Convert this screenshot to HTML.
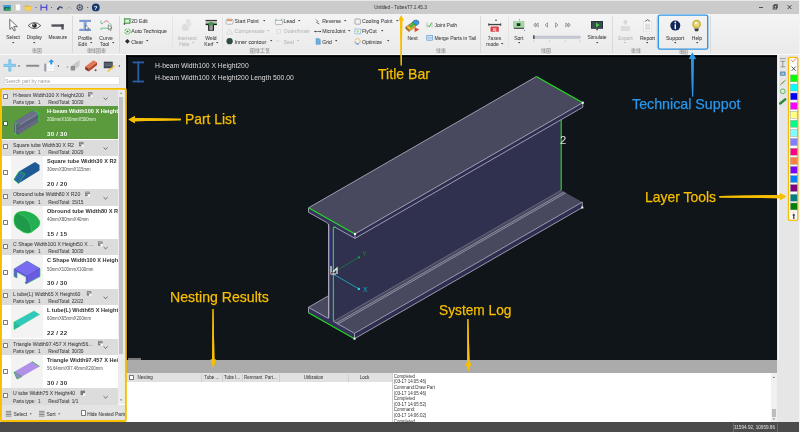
<!DOCTYPE html>
<html><head><meta charset="utf-8">
<style>
*{box-sizing:border-box}
html,body{margin:0;padding:0;width:800px;height:432px;overflow:hidden;background:#efefef;font-family:"Liberation Sans",sans-serif}
.a{position:absolute}
.t{position:absolute;white-space:nowrap;line-height:10px;height:10px;font-size:5.1px;color:#464646;-webkit-text-stroke:0.06px currentColor}
.g{color:#b8b8b8}
.b{font-weight:bold;-webkit-text-stroke:0}
.ann{position:absolute;white-space:nowrap;font-size:14px;line-height:16px;color:#f7bf00}
svg{overflow:visible}
</style></head><body>
<div id="root" style="position:absolute;left:0;top:0;width:800px;height:432px;overflow:hidden;will-change:transform"><!-- BASE -->
<div class="a" style="left:0;top:0;width:800px;height:14px;background:#cbcbcb;border-top:1px solid #e8e8e8"></div>
<div class="a" style="left:0;top:14px;width:799px;height:40px;background:linear-gradient(#f4f4f4,#eaeaea)"></div>
<div class="a" style="left:0;top:53.8px;width:799px;height:1.2px;background:#fafafa"></div>
<div class="a" style="left:0;top:55px;width:126px;height:367px;background:#e8e8e8"></div>
<div class="a" style="left:126px;top:55px;width:652px;height:305px;background:#10151a"></div>
<div class="a" style="left:777px;top:55px;width:22px;height:367px;background:#e6e6e6"></div>
<div class="a" style="left:777.5px;top:55px;width:1px;height:305px;background:#f6f6f6"></div>
<div class="a" style="left:799px;top:0;width:1px;height:432px;background:#f4f4f4"></div>
<div class="a" style="left:126px;top:360px;width:651px;height:13px;background:#ababab"></div>
<div class="a" style="left:126px;top:373px;width:266px;height:49px;background:#fff"></div>
<div class="a" style="left:126px;top:373px;width:266px;height:8.7px;background:#e1e1e1"></div>
<div class="a" style="left:391.5px;top:373px;width:385.5px;height:49px;background:#fff;border-left:1px solid #d0d0d0"></div>
<div class="a" style="left:0;top:422px;width:799px;height:10px;background:#4b4b4b"></div>
<div class="a" style="left:126px;top:358.2px;width:15px;height:1.8px;background:#7a7a7a"></div>
<div class="a" style="left:126px;top:55.6px;width:651px;height:1.2px;background:#000"></div>
<div class="a" style="left:126.7px;top:55px;width:1.3px;height:305px;background:#000"></div>
<!-- TITLE -->
<svg class="a" style="left:0;top:0" width="800" height="14">
 <!-- app icon -->
 <rect x="3.7" y="5" width="6.8" height="5.6" fill="#1f5f8a"/>
 <rect x="3.7" y="5" width="6.8" height="2" fill="#3aa0d8"/>
 <path d="M4.5,10.5 L6.5,7.5 L8.5,9 L10.5,6.5 L10.5,10.6 Z" fill="#2fae3a"/>
 <!-- new doc -->
 <rect x="15.8" y="4.2" width="4.4" height="6.4" fill="#fbfbfb" stroke="#d8d8d8" stroke-width="0.3"/>
 <!-- folder -->
 <path d="M24.8,5.2 h2.5 l0.8,0.9 h3.4 v4.4 h-6.7 Z" fill="#e7b43a"/>
 <path d="M24.8,6.8 h6.7 v3.7 h-6.7 Z" fill="#f6cf5c"/>
 <circle cx="36" cy="7.5" r="0.5" fill="#333"/>
 <!-- save H -->
 <path d="M41,4.6 v5.8 M46.7,4.6 v5.8 M41,7.4 h5.7" stroke="#5a4fd0" stroke-width="1.3" fill="none"/>
 <circle cx="51.7" cy="7.5" r="0.5" fill="#333"/>
 <!-- undo -->
 <path d="M57.5,9.5 Q59.5,5 62.5,8.2" stroke="#2c3e60" stroke-width="1.3" fill="none"/>
 <path d="M56.8,8.2 l1.6,1.8 l1.2,-1.6 z" fill="#2c3e60"/>
 <!-- redo gray -->
 <path d="M66.8,9.5 Q69,5 71.5,9" stroke="#b0b0b0" stroke-width="1" fill="none"/>
 <!-- gear -->
 <circle cx="79.8" cy="7.5" r="2.6" fill="none" stroke="#35455e" stroke-width="1.6" stroke-dasharray="1.1 0.5"/>
 <circle cx="79.8" cy="7.5" r="1" fill="#35455e"/>
 <circle cx="87.7" cy="7.5" r="0.5" fill="#333"/>
 <!-- help -->
 <circle cx="95.8" cy="7.4" r="3.9" fill="#163a6e"/>
 <text x="95.8" y="9.5" text-anchor="middle" font-family="Liberation Sans" font-weight="bold" font-size="5.6" fill="#fff">?</text>
 <!-- window controls -->
 <rect x="759" y="7" width="4" height="0.9" fill="#444"/>
 <rect x="773.2" y="5.6" width="3.4" height="3.4" fill="none" stroke="#444" stroke-width="0.9"/>
 <rect x="774.4" y="4.6" width="3.2" height="3.2" fill="none" stroke="#444" stroke-width="0.7"/>
 <path d="M787.6,5.2 l3.8,3.8 M791.4,5.2 l-3.8,3.8" stroke="#333" stroke-width="0.9"/>
</svg>
<div class="t" style="left:364px;top:2.5px;width:73px;text-align:center;font-size:4.7px;color:#444">Untitled - TubesT7.1.45.3</div>
<svg class="a" style="left:0;top:0" width="800" height="56">
 <!-- Select -->
 <path d="M9.7,19.3 L9.9,29.4 L12.1,27.4 L14,31 L15.5,30.2 L13.7,26.7 L17.4,26.6 Z" fill="#fafafa" stroke="#4a4a4a" stroke-width="0.8" stroke-linejoin="round"/>
 <!-- Display -->
 <path d="M28.2,25.6 Q34.5,19.6 40.8,25.6 Q34.5,31.6 28.2,25.6 Z" fill="#fafafa" stroke="#4a4a4a" stroke-width="0.9"/>
 <circle cx="34.5" cy="25.5" r="2.3" fill="#2a2a2a"/><circle cx="33.8" cy="24.8" r="0.7" fill="#ddd"/>
 <!-- Measure -->
 <rect x="51.5" y="24.3" width="12" height="2.4" fill="#4a4d55"/>
 <rect x="61.4" y="24.3" width="2.3" height="5.2" fill="#4a4d55"/>
 <path d="M53,24.3 v1 M55,24.3 v1 M57,24.3 v1 M59,24.3 v1" stroke="#ddd" stroke-width="0.4"/>
 <!-- Profile Edit -->
 <rect x="79.3" y="19.8" width="11.7" height="2.2" fill="#7d9bd2"/>
 <rect x="79.3" y="28.8" width="11.7" height="2.2" fill="#7d9bd2"/>
 <rect x="83.6" y="22" width="3.1" height="6.8" fill="#8aa7d8"/>
 <path d="M85.5,25 L85.6,30 L86.7,29 L87.6,30.8 L88.4,30.4 L87.5,28.7 L89.3,28.6 Z" fill="#fff" stroke="#333" stroke-width="0.5"/>
 <!-- Curve Tool -->
 <path d="M101,20.5 V23.6 H103" stroke="#50c878" stroke-width="0.9" fill="none"/>
 <path d="M103.5,23 Q106,19 109,22.6" stroke="#e0609a" stroke-width="0.9" fill="none"/>
 <path d="M109.5,23 Q112,24.5 111.5,28" stroke="#50c878" stroke-width="0.9" fill="none"/>
 <path d="M101,28.2 H108.5 M101,28.2 V30" stroke="#50c878" stroke-width="0.9" fill="none"/>
 <path d="M108.3,24.8 L108.4,29.8 L109.5,28.8 L110.4,30.6 L111.2,30.2 L110.3,28.5 L112.1,28.4 Z" fill="#fff" stroke="#333" stroke-width="0.5"/>
 <!-- 2D Edit -->
 <rect x="124.2" y="18.6" width="6" height="5" fill="#6cbf6c" stroke="#3a8a3a" stroke-width="0.5"/>
 <rect x="125.4" y="19.8" width="3.6" height="2.6" fill="#e9f5e9"/>
 <circle cx="124.4" cy="24" r="0.8" fill="#222"/>
 <!-- Auto Technique -->
 <circle cx="127.5" cy="31.5" r="2.8" fill="none" stroke="#5cb85c" stroke-width="0.9" stroke-dasharray="3.5 1"/>
 <circle cx="127.5" cy="31.5" r="1.1" fill="#3a9a3a"/>
 <!-- Clear -->
 <path d="M127.4,38.9 L129.8,41.3 L127.4,43.7 L125,41.3 Z" fill="#2a2a2a"/>
 <!-- Intersect Hole -->
 <circle cx="185.5" cy="27.5" r="3.6" fill="#dcdcdc"/>
 <circle cx="188.5" cy="24" r="3" fill="#e4e4e4"/>
 <rect x="186.5" y="19.3" width="3.5" height="3" rx="1" fill="#e0e0e0"/>
 <!-- Weld Kerf -->
 <rect x="205.6" y="19.9" width="11.3" height="1.4" fill="#333"/>
 <rect x="205.6" y="21.3" width="11.3" height="2.4" fill="#b8b8b8"/>
 <rect x="205.6" y="23.6" width="11.3" height="1.5" fill="#1a1a1a"/>
 <rect x="208.1" y="23.6" width="5.9" height="7.2" fill="#222"/>
 <rect x="209.3" y="25" width="3.5" height="5.2" fill="#9a9a9a"/>
 <path d="M208.3,23.2 Q211,20.6 213.8,23.2 L213,25.6 L209,25.6 Z" fill="#3a9a44"/>
 <!-- Start Point -->
 <rect x="226" y="19.2" width="7" height="5" rx="1.2" fill="#f8f8f8" stroke="#8a8f9a" stroke-width="0.6"/>
 <rect x="227" y="19.6" width="5" height="1.6" fill="#f08a4a"/>
 <!-- Compensate -->
 <path d="M226.5,34 L229.5,28.8 L232.5,34 Z" fill="none" stroke="#cfcfcf" stroke-width="0.6"/>
 <!-- Inner contour -->
 <circle cx="229.6" cy="41.2" r="3.1" fill="#2f4a44"/>
 <!-- Lead -->
 <rect x="275.3" y="20.4" width="7.2" height="4.2" rx="1" fill="#f5f5f5" stroke="#8a8f9a" stroke-width="0.6"/>
 <path d="M276,20.5 v-1.6 M281.6,20.5 v-1.6" stroke="#30b040" stroke-width="0.8"/>
 <!-- Outer/Inner -->
 <rect x="276.8" y="29.6" width="3.6" height="3.6" fill="none" stroke="#cfcfcf" stroke-width="0.6"/>
 <!-- Seal -->
 <path d="M276.5,41 h4 M277,40 v2" stroke="#d0d0d0" stroke-width="0.5"/>
 <!-- Reverse -->
 <path d="M316,19.5 L318,21.5 L316.5,22.5 L319.5,24" stroke="#555" stroke-width="0.7" fill="none"/>
 <!-- MicroJoint -->
 <path d="M314.3,31.5 h6.8" stroke="#333" stroke-width="0.6"/>
 <path d="M314.3,31.5 l1.3,-1 v2 z M321.1,31.5 l-1.3,-1 v2 z" fill="#333"/>
 <!-- Grid -->
 <path d="M316,38.5 h3 l1.3,1.3 v4.5 h-4.3 z" fill="#6ab0e0" stroke="#3a80b0" stroke-width="0.4"/>
 <!-- Cooling Point -->
 <rect x="355" y="19" width="5.4" height="5.2" rx="0.8" fill="none" stroke="#777" stroke-width="0.6"/>
 <!-- FlyCut -->
 <rect x="354.8" y="29" width="5.8" height="4.8" fill="none" stroke="#5aaad8" stroke-width="0.8" stroke-dasharray="1.2 0.6"/>
 <rect x="356.6" y="30.4" width="2.2" height="2" fill="#c0d870"/>
 <!-- Optimize -->
 <circle cx="357.6" cy="41.2" r="2.6" fill="none" stroke="#e0a030" stroke-width="0.9" stroke-dasharray="2 1"/>
 <path d="M355.2,42.5 a2.6,2.6 0 0 0 4,1" stroke="#3a8ad8" stroke-width="0.9" fill="none"/>
 <!-- Nest -->
 <path d="M405.8,27 L412.5,22.6 L416,25.6 L409.2,30.2 Z" fill="#f2c42a" stroke="#5a4020" stroke-width="0.45"/>
 <path d="M405.8,27 L409.2,30.2 L409.2,31.8 L405.8,28.7 Z" fill="#b8741e" stroke="#5a4020" stroke-width="0.4"/>
 <path d="M409.2,30.2 L416,25.6 L416,27 L409.2,31.8 Z" fill="#d89a22"/>
 <path d="M408.5,25.2 L413.8,21.6 L416.2,23.8 L410.8,27.6 Z" fill="#3cc04a" stroke="#2a5a2a" stroke-width="0.35"/>
 <path d="M413.8,20.6 Q416.5,19.2 418.5,21 Q419.8,23 417.8,24.8 L416.2,25.6 L412.6,22 Z" fill="#3a98e0" stroke="#1a3a6a" stroke-width="0.45"/>
 <path d="M414.6,27.2 L419.2,29.6 L414.6,31.9 Z" fill="#e0402c"/>
 <path d="M407.5,26.5 L411,24.2" stroke="#f07a5a" stroke-width="0.7"/>
 <!-- Joint Path -->
 <path d="M427,22.3 v5.4 M432,22.3 v5.4" stroke="#888" stroke-width="0.5"/>
 <path d="M428,25.3 L429.3,27 L431.5,22.8" stroke="#40b040" stroke-width="0.9" fill="none"/>
 <!-- Merge Parts -->
 <rect x="426.8" y="35.6" width="5.6" height="4.6" fill="#cfe3f5" stroke="#4a90d0" stroke-width="0.6"/>
 <path d="M427.5,37.9 h4.2" stroke="#4a90d0" stroke-width="0.5"/>
 <!-- 7axes mode -->
 <circle cx="496" cy="20.3" r="0.8" fill="#333"/>
 <rect x="488.5" y="23.9" width="12.5" height="1.3" fill="#444"/>
 <rect x="488.3" y="23.3" width="0.9" height="2.5" fill="#444"/><rect x="500.3" y="23.3" width="0.9" height="2.5" fill="#444"/>
 <rect x="490.5" y="26.5" width="8.3" height="5.3" rx="0.6" fill="#e0404a"/>
 <text x="494.6" y="30.9" text-anchor="middle" font-family="Liberation Sans" font-size="4.2" font-weight="bold" fill="#fff">5|</text>
 <!-- Sort -->
 <circle cx="519.5" cy="19.8" r="0.6" fill="#666"/>
 <rect x="513.5" y="21.6" width="10.5" height="6.2" fill="#a8d8a8" stroke="#6ac06a" stroke-width="0.4"/>
 <rect x="516.8" y="23.2" width="3.6" height="2.8" fill="#113a1a"/>
 <rect x="514" y="27.8" width="10" height="1" fill="#333"/>
 <circle cx="524.5" cy="30.3" r="0.5" fill="#666"/>
 <!-- playback -->
 <path d="M533.5,25 l2.2,-2 v4 z M536,25 l2.2,-2 v4 z" fill="none" stroke="#5a5a6a" stroke-width="0.55"/>
 <path d="M545,25 l2.5,-2.2 v4.4 z" fill="none" stroke="#5a5a6a" stroke-width="0.55"/>
 <path d="M558,25 l-2.5,-2.2 v4.4 z" fill="none" stroke="#5a5a6a" stroke-width="0.55"/>
 <path d="M568,25 l-2.2,-2 v4 z M570.5,25 l-2.2,-2 v4 z" fill="none" stroke="#5a5a6a" stroke-width="0.55"/>
 <!-- slider -->
 <rect x="533" y="36" width="47.5" height="2.4" rx="1" fill="#c6cad4" stroke="#a8acb8" stroke-width="0.3"/>
 <rect x="533" y="35.3" width="1.6" height="3.6" fill="#4a5060"/>
 <path d="M533.8,40.7 v0.8 M549.6,40.7 v0.8 M565.4,40.7 v0.8 M580.2,40.7 v0.8" stroke="#666" stroke-width="0.5"/>
 <!-- Simulate -->
 <rect x="591" y="21" width="12" height="7.8" fill="#28303a"/>
 <rect x="591.8" y="21.8" width="10.4" height="6.2" fill="#3a4a50"/>
 <path d="M596,22.4 L599.6,24.9 L596,27.4 Z" fill="#40d040"/>
 <rect x="596.3" y="28.8" width="1.6" height="1.4" fill="#333"/>
 <!-- Export -->
 <path d="M625.4,19.5 L628.2,22.4 H626.4 V24.5 H624.4 V22.4 H622.6 Z" fill="#d6d6d6"/>
 <rect x="620.8" y="26" width="9.2" height="5" fill="#dcdcdc"/>
 <!-- Report -->
 <rect x="643.8" y="21.5" width="7.6" height="9.6" fill="#fdfdfd" stroke="#c8c8c8" stroke-width="0.4"/>
 <rect x="645" y="23.5" width="5.2" height="6.5" fill="#dedede"/>
 <path d="M645.3,21.3 L647.6,19.6 L649.9,21.3" stroke="#333" stroke-width="0.7" fill="none"/>
 <!-- Support -->
 <circle cx="675.3" cy="25.6" r="5" fill="#0f2858"/>
 <circle cx="675.3" cy="22.5" r="0.9" fill="#fff"/>
 <rect x="674.6" y="24.3" width="1.4" height="4.8" fill="#fff"/>
 <!-- Help -->
 <circle cx="696.6" cy="24.2" r="4.4" fill="#c9b23a"/>
 <circle cx="696.6" cy="24.2" r="3" fill="#e6d67a"/>
 <circle cx="696" cy="23" r="1.3" fill="#fbf6d8"/>
 <path d="M694.3,28.5 h4.6 l-0.8,2.8 h-3 z" fill="#3a3a4a"/>
</svg>
<svg class="a" style="left:0;top:0" width="800" height="56"><rect x="658.3" y="15.1" width="49.4" height="34" rx="1.6" fill="none" stroke="#2f95e8" stroke-width="1.4"/></svg>
<div class="a" style="left:72.00px;top:16px;width:0.8px;height:37px;background:#dadada"></div>
<div class="a" style="left:118.70px;top:16px;width:0.8px;height:37px;background:#dadada"></div>
<div class="a" style="left:479.50px;top:16px;width:0.8px;height:37px;background:#dadada"></div>
<div class="a" style="left:611.70px;top:16px;width:0.8px;height:37px;background:#dadada"></div>
<div class="a" style="left:710.20px;top:16px;width:0.8px;height:37px;background:#dadada"></div>
<div class="a" style="left:171.90px;top:17px;width:0.8px;height:31px;background:#e4e4e4"></div>
<div class="a" style="left:222.10px;top:17px;width:0.8px;height:31px;background:#e4e4e4"></div>
<div class="a" style="left:507.50px;top:17px;width:0.8px;height:31px;background:#e4e4e4"></div>
<div class="a" style="left:656.00px;top:17px;width:0.8px;height:31px;background:#e4e4e4"></div>
<svg class="a" style="left:32.00px;top:48.30px" width="4.8" height="5.3"><path d="M0.3,1 h4.2 M2.4,0.2 v4.8 M0.8,2.8 h3.4 M0.6,4.6 h3.8 M1.2,1.8 l-0.8,1.6 M3.6,1.8 l0.8,1.6" stroke="#8e8e8e" stroke-width="0.6" fill="none"/></svg>
<svg class="a" style="left:36.60px;top:48.30px" width="4.8" height="5.3"><path d="M0.3,0.5 h4 v4.6 h-4 z M1.2,2 h2.2 M1.2,3.5 h2.2 M2.3,1.2 v3" stroke="#8e8e8e" stroke-width="0.6" fill="none"/></svg>
<svg class="a" style="left:86.60px;top:48.30px" width="4.8" height="5.3"><path d="M0.3,1 h4.2 M2.4,0.2 v4.8 M0.8,2.8 h3.4 M0.6,4.6 h3.8 M1.2,1.8 l-0.8,1.6 M3.6,1.8 l0.8,1.6" stroke="#8e8e8e" stroke-width="0.6" fill="none"/></svg>
<svg class="a" style="left:91.30px;top:48.30px" width="4.8" height="5.3"><path d="M1,0.2 v4.9 M0.2,1.8 h1.5 M2,1.2 h2.6 M2,2.8 h2.6 M2,4.5 h2.6 M3.3,0.2 v4.9" stroke="#8e8e8e" stroke-width="0.6" fill="none"/></svg>
<svg class="a" style="left:96.00px;top:48.30px" width="4.8" height="5.3"><path d="M0.3,0.5 h4 v4.6 h-4 z M1.2,2 h2.2 M1.2,3.5 h2.2 M2.3,1.2 v3" stroke="#8e8e8e" stroke-width="0.6" fill="none"/></svg>
<svg class="a" style="left:100.70px;top:48.30px" width="4.8" height="5.3"><path d="M0.3,1 h4.2 M2.4,0.2 v4.8 M0.8,2.8 h3.4 M0.6,4.6 h3.8 M1.2,1.8 l-0.8,1.6 M3.6,1.8 l0.8,1.6" stroke="#8e8e8e" stroke-width="0.6" fill="none"/></svg>
<svg class="a" style="left:250.10px;top:48.30px" width="4.8" height="5.3"><path d="M0.3,0.5 h4 v4.6 h-4 z M1.2,2 h2.2 M1.2,3.5 h2.2 M2.3,1.2 v3" stroke="#8e8e8e" stroke-width="0.6" fill="none"/></svg>
<svg class="a" style="left:255.20px;top:48.30px" width="4.8" height="5.3"><path d="M1,0.2 v4.9 M0.2,1.8 h1.5 M2,1.2 h2.6 M2,2.8 h2.6 M2,4.5 h2.6 M3.3,0.2 v4.9" stroke="#8e8e8e" stroke-width="0.6" fill="none"/></svg>
<svg class="a" style="left:260.30px;top:48.30px" width="4.8" height="5.3"><path d="M0.5,0.8 h3.8 M2.4,0.8 v3.8 M0.2,4.6 h4.4" stroke="#8e8e8e" stroke-width="0.6" fill="none"/></svg>
<svg class="a" style="left:265.40px;top:48.30px" width="4.8" height="5.3"><path d="M0.3,1 h4.2 M1.5,0.2 v1.6 M3.3,0.2 v1.6 M0.8,2.6 h3.2 l-3,2.2 h3.8" stroke="#8e8e8e" stroke-width="0.6" fill="none"/></svg>
<svg class="a" style="left:436.00px;top:48.30px" width="4.8" height="5.3"><path d="M1,0.2 v4.9 M0.2,1.8 h1.5 M2,1.2 h2.6 M2,2.8 h2.6 M2,4.5 h2.6 M3.3,0.2 v4.9" stroke="#8e8e8e" stroke-width="0.6" fill="none"/></svg>
<svg class="a" style="left:440.80px;top:48.30px" width="4.8" height="5.3"><path d="M0.3,1 h4.2 M2.4,0.2 v4.8 M0.8,2.8 h3.4 M0.6,4.6 h3.8 M1.2,1.8 l-0.8,1.6 M3.6,1.8 l0.8,1.6" stroke="#8e8e8e" stroke-width="0.6" fill="none"/></svg>
<svg class="a" style="left:541.00px;top:48.30px" width="4.8" height="5.3"><path d="M1,0.2 v4.9 M0.2,1.8 h1.5 M2,1.2 h2.6 M2,2.8 h2.6 M2,4.5 h2.6 M3.3,0.2 v4.9" stroke="#8e8e8e" stroke-width="0.6" fill="none"/></svg>
<svg class="a" style="left:546.10px;top:48.30px" width="4.8" height="5.3"><path d="M0.3,0.5 h4 v4.6 h-4 z M1.2,2 h2.2 M1.2,3.5 h2.2 M2.3,1.2 v3" stroke="#8e8e8e" stroke-width="0.6" fill="none"/></svg>
<svg class="a" style="left:631.00px;top:48.30px" width="4.8" height="5.3"><path d="M0.3,1 h4.2 M2.4,0.2 v4.8 M0.8,2.8 h3.4 M0.6,4.6 h3.8 M1.2,1.8 l-0.8,1.6 M3.6,1.8 l0.8,1.6" stroke="#8e8e8e" stroke-width="0.6" fill="none"/></svg>
<svg class="a" style="left:635.90px;top:48.30px" width="4.8" height="5.3"><path d="M1,0.2 v4.9 M0.2,1.8 h1.5 M2,1.2 h2.6 M2,2.8 h2.6 M2,4.5 h2.6 M3.3,0.2 v4.9" stroke="#8e8e8e" stroke-width="0.6" fill="none"/></svg>
<svg class="a" style="left:679.00px;top:48.60px" width="4.8" height="5.3"><path d="M0.3,1 h4.2 M2.4,0.2 v4.8 M0.8,2.8 h3.4 M0.6,4.6 h3.8 M1.2,1.8 l-0.8,1.6 M3.6,1.8 l0.8,1.6" stroke="#8e8e8e" stroke-width="0.6" fill="none"/></svg>
<svg class="a" style="left:683.20px;top:48.60px" width="4.8" height="5.3"><path d="M0.3,0.5 h4 v4.6 h-4 z M1.2,2 h2.2 M1.2,3.5 h2.2 M2.3,1.2 v3" stroke="#8e8e8e" stroke-width="0.6" fill="none"/></svg>
<div class="t " style="top:33.30px;font-size:4.9px;left:-6.90px;width:40px;text-align:center;">Select</div>
<svg class="a" style="left:11.80px;top:42.10px" width="2.4" height="1.6"><path d="M0,0 H2.4 L1.2,1.4 Z" fill="#444"/></svg>
<div class="t " style="top:33.30px;font-size:4.6px;left:14.40px;width:40px;text-align:center;">Display</div>
<svg class="a" style="left:32.80px;top:42.10px" width="2.4" height="1.6"><path d="M0,0 H2.4 L1.2,1.4 Z" fill="#444"/></svg>
<div class="t " style="top:33.30px;font-size:4.75px;left:37.80px;width:40px;text-align:center;">Measure</div>
<div class="t " style="top:33.30px;font-size:5px;left:65.20px;width:40px;text-align:center;">Profile</div>
<div class="t " style="top:38.90px;font-size:5px;left:62.60px;width:40px;text-align:center;">Edit</div>
<svg class="a" style="left:89.80px;top:42.20px" width="2.4" height="1.6"><path d="M0,0 H2.4 L1.2,1.4 Z" fill="#444"/></svg>
<div class="t " style="top:33.30px;font-size:5px;left:86.00px;width:40px;text-align:center;">Curve</div>
<div class="t " style="top:38.90px;font-size:5px;left:84.60px;width:40px;text-align:center;">Tool</div>
<svg class="a" style="left:111.70px;top:42.20px" width="2.4" height="1.6"><path d="M0,0 H2.4 L1.2,1.4 Z" fill="#444"/></svg>
<div class="t g" style="top:33.30px;font-size:5px;left:167.00px;width:40px;text-align:center;">Intersect</div>
<div class="t g" style="top:38.90px;font-size:5px;left:164.30px;width:40px;text-align:center;">Hole</div>
<svg class="a" style="left:191.90px;top:42.20px" width="2.4" height="1.6"><path d="M0,0 H2.4 L1.2,1.4 Z" fill="#bbb"/></svg>
<div class="t " style="top:33.30px;font-size:5px;left:191.00px;width:40px;text-align:center;">Weld</div>
<div class="t " style="top:38.90px;font-size:5px;left:188.90px;width:40px;text-align:center;">Kerf</div>
<svg class="a" style="left:215.90px;top:42.20px" width="2.4" height="1.6"><path d="M0,0 H2.4 L1.2,1.4 Z" fill="#444"/></svg>
<div class="t " style="top:33.40px;font-size:5px;left:392.60px;width:40px;text-align:center;">Nest</div>
<div class="t " style="top:33.40px;font-size:5px;left:474.50px;width:40px;text-align:center;">7axes</div>
<div class="t " style="top:39.00px;font-size:5px;left:472.50px;width:40px;text-align:center;">mode</div>
<svg class="a" style="left:501.30px;top:42.50px" width="2.4" height="1.6"><path d="M0,0 H2.4 L1.2,1.4 Z" fill="#444"/></svg>
<div class="t " style="top:33.40px;font-size:5px;left:498.80px;width:40px;text-align:center;">Sort</div>
<svg class="a" style="left:517.60px;top:42.10px" width="2.4" height="1.6"><path d="M0,0 H2.4 L1.2,1.4 Z" fill="#444"/></svg>
<div class="t " style="top:33.40px;font-size:4.9px;left:577.00px;width:40px;text-align:center;">Simulate</div>
<svg class="a" style="left:595.80px;top:42.10px" width="2.4" height="1.6"><path d="M0,0 H2.4 L1.2,1.4 Z" fill="#444"/></svg>
<div class="t g" style="top:33.40px;font-size:5px;left:605.40px;width:40px;text-align:center;">Export</div>
<svg class="a" style="left:624.20px;top:42.10px" width="2.4" height="1.6"><path d="M0,0 H2.4 L1.2,1.4 Z" fill="#bbb"/></svg>
<div class="t " style="top:33.40px;font-size:5px;left:627.50px;width:40px;text-align:center;">Report</div>
<svg class="a" style="left:646.30px;top:42.10px" width="2.4" height="1.6"><path d="M0,0 H2.4 L1.2,1.4 Z" fill="#444"/></svg>
<div class="t " style="top:33.40px;font-size:5.2px;left:655.00px;width:40px;text-align:center;">Support</div>
<svg class="a" style="left:673.80px;top:42.10px" width="2.4" height="1.6"><path d="M0,0 H2.4 L1.2,1.4 Z" fill="#444"/></svg>
<div class="t " style="top:33.40px;font-size:5px;left:677.00px;width:40px;text-align:center;">Help</div>
<svg class="a" style="left:695.80px;top:42.10px" width="2.4" height="1.6"><path d="M0,0 H2.4 L1.2,1.4 Z" fill="#444"/></svg>
<div class="t " style="top:16.30px;font-size:5.0px;left:131.30px;">2D Edit</div>
<div class="t " style="top:26.30px;font-size:5.2px;left:131.30px;">Auto Technique</div>
<div class="t " style="top:36.60px;font-size:5.0px;left:131.30px;">Clear</div>
<svg class="a" style="left:145.80px;top:39.90px" width="2.4" height="1.6"><path d="M0,0 H2.4 L1.2,1.4 Z" fill="#444"/></svg>
<div class="t " style="top:16.30px;font-size:5.2px;left:234.60px;">Start Point</div>
<svg class="a" style="left:263.10px;top:19.60px" width="2.4" height="1.6"><path d="M0,0 H2.4 L1.2,1.4 Z" fill="#444"/></svg>
<div class="t g" style="top:26.30px;font-size:5.3px;left:234.60px;">Compensate</div>
<svg class="a" style="left:266.80px;top:29.60px" width="2.4" height="1.6"><path d="M0,0 H2.4 L1.2,1.4 Z" fill="#bbb"/></svg>
<div class="t " style="top:36.60px;font-size:5.4px;left:234.60px;">Inner contour</div>
<svg class="a" style="left:269.80px;top:39.90px" width="2.4" height="1.6"><path d="M0,0 H2.4 L1.2,1.4 Z" fill="#444"/></svg>
<div class="t " style="top:16.30px;font-size:5.2px;left:283.50px;">Lead</div>
<svg class="a" style="left:298.30px;top:19.60px" width="2.4" height="1.6"><path d="M0,0 H2.4 L1.2,1.4 Z" fill="#444"/></svg>
<div class="t g" style="top:26.30px;font-size:5.2px;left:283.50px;">Outer/Inner</div>
<div class="t g" style="top:36.60px;font-size:5.2px;left:283.50px;">Seal</div>
<svg class="a" style="left:296.80px;top:39.90px" width="2.4" height="1.6"><path d="M0,0 H2.4 L1.2,1.4 Z" fill="#bbb"/></svg>
<div class="t " style="top:16.30px;font-size:5.1px;left:322.20px;">Reverse</div>
<svg class="a" style="left:344.30px;top:19.60px" width="2.4" height="1.6"><path d="M0,0 H2.4 L1.2,1.4 Z" fill="#444"/></svg>
<div class="t " style="top:26.30px;font-size:5.1px;left:322.20px;">MicroJoint</div>
<svg class="a" style="left:347.80px;top:29.60px" width="2.4" height="1.6"><path d="M0,0 H2.4 L1.2,1.4 Z" fill="#444"/></svg>
<div class="t " style="top:36.60px;font-size:5.1px;left:322.20px;">Grid</div>
<svg class="a" style="left:334.80px;top:39.90px" width="2.4" height="1.6"><path d="M0,0 H2.4 L1.2,1.4 Z" fill="#444"/></svg>
<div class="t " style="top:16.30px;font-size:5.13px;left:362.00px;">Cooling Point</div>
<svg class="a" style="left:395.80px;top:19.60px" width="2.4" height="1.6"><path d="M0,0 H2.4 L1.2,1.4 Z" fill="#444"/></svg>
<div class="t " style="top:26.30px;font-size:5.1px;left:362.00px;">FlyCut</div>
<svg class="a" style="left:380.80px;top:29.60px" width="2.4" height="1.6"><path d="M0,0 H2.4 L1.2,1.4 Z" fill="#444"/></svg>
<div class="t " style="top:36.60px;font-size:5.1px;left:362.00px;">Optimize</div>
<svg class="a" style="left:386.80px;top:39.90px" width="2.4" height="1.6"><path d="M0,0 H2.4 L1.2,1.4 Z" fill="#444"/></svg>
<div class="t " style="top:20.00px;font-size:5.1px;left:434.40px;">Joint Path</div>
<div class="t " style="top:33.20px;font-size:5.07px;left:434.40px;">Merge Parts in Tail</div><svg class="a" style="left:0;top:0" width="130" height="90">
 <path d="M8.7,59.6 h2.2 v4.7 h4.8 v2.2 h-4.8 v4.7 h-2.2 v-4.7 h-4.8 v-2.2 h4.8 z" fill="#8fd0f2" stroke="#56a8dc" stroke-width="0.5"/>
 <rect x="18.4" y="65.4" width="1.2" height="1.1" fill="#222"/>
 <rect x="26" y="64.8" width="13.4" height="1.9" rx="0.9" fill="#8c8c8c"/>
 <rect x="46.5" y="63" width="8.3" height="8.5" fill="#fafafa" stroke="#cfcfcf" stroke-width="0.4"/>
 <path d="M47.5,66.5 h6 M47.5,68.5 h6" stroke="#c8d8e8" stroke-width="0.4"/>
 <rect x="44.2" y="63.5" width="2" height="8" rx="0.8" fill="#9a9ea8"/>
 <path d="M51.3,59.2 L54,62 H52.3 V64.5 H50.3 V62 H48.6 Z" fill="#1e9ae8"/>
 <rect x="57.8" y="65.4" width="1.2" height="1.1" fill="#222"/>
 <circle cx="67.5" cy="67" r="0.8" fill="#9a9a9a"/>
 <path d="M70,67 L74,64 L79.5,60 L79.5,66 L74,70 L70,70 Z" fill="#c8c8c8"/>
 <path d="M71,66 L75,66 L75,70.5 L71,70.5 Z" fill="#8e8e8e"/>
 <path d="M85.2,66.5 L93.5,60.2 L97,62.2 L88.8,68.6 Z" fill="#e07a5a"/>
 <path d="M85.2,66.5 L88.8,68.6 L88.8,71.6 L85.2,69.5 Z" fill="#8a3020"/>
 <path d="M88.8,68.6 L97,62.2 L97,65.2 L88.8,71.6 Z" fill="#b8482c"/>
 <circle cx="95.6" cy="70.2" r="1" fill="#8a3a30"/>
 <rect x="103.5" y="61.3" width="9.5" height="7.2" fill="#3c4450" stroke="#f0f0f0" stroke-width="0.5"/>
 <path d="M104.5,64 h7.5 M104.5,65.8 h7.5" stroke="#a8b0c0" stroke-width="0.5"/>
 <path d="M107.6,71.5 L114.5,65.5" stroke="#f0c020" stroke-width="1.3"/>
 <rect x="118.8" y="65.4" width="1.2" height="1.1" fill="#222"/>
</svg>
<div class="a" style="left:3.5px;top:75.7px;width:116.7px;height:9.5px;background:#fff;border:0.5px solid #e0e0e0"></div>
<div class="t " style="left:5.20px;top:76.60px;font-size:4.85px;color:#9c9c9c;-webkit-text-stroke:0;">Search part by name</div>
<div class="a" style="left:2px;top:89.4px;width:122.7px;height:331.5px;background:#fff"></div>
<div class="a" style="left:117.8px;top:89.4px;width:6.9px;height:315px;background:#ececec"></div>
<div class="a" style="left:119.2px;top:96.5px;width:3.7px;height:257.5px;background:#c2c2c2"></div>
<svg class="a" style="left:0;top:0" width="130" height="420"><path d="M120,94 L121.1,92.7 L122.2,94" stroke="#555" stroke-width="0.5" fill="none"/><path d="M120,399.5 L121.1,400.8 L122.2,399.5 Z" fill="#555"/></svg>
<div class="a" style="left:2px;top:89.85px;width:115.8px;height:16.2px;background:#dcdcdc"></div>
<div class="a" style="left:3px;top:94.45px;width:5px;height:5px;background:#fff;border:0.6px solid #7a7a7a;border-radius:0.8px"></div>
<div class="t " style="left:13.00px;top:89.75px;font-size:5.13px;color:#444;">H-beam Width100 X Height200</div>
<div class="t " style="left:13.00px;top:98.05px;font-size:4.72px;color:#444;">Parts type: &nbsp;1</div>
<div class="t " style="left:48.20px;top:98.05px;font-size:4.72px;color:#444;">Rest/Total: 30/30</div>
<div class="a" style="left:2px;top:106.05px;width:115.8px;height:33.45px;background:#5b9a3d"></div>
<div class="a" style="left:3px;top:120.65px;width:5px;height:5px;background:#fff;border:0.6px solid #3a6a2a;border-radius:0.8px"></div>
<div class="a" style="left:47px;top:106.15px;width:70.8px;height:10px;overflow:hidden"><div class="t b" style="left:0;top:0;font-size:5.6px;color:#ffffff">H-beam Width100 X Height200</div></div>
<div class="t " style="left:47.00px;top:114.25px;font-size:5.0px;color:#d8ecd0;transform:scaleX(0.86);transform-origin:0 0;">200mmX100mmX500mm</div>
<div class="t b" style="left:47px;top:129.05px;font-size:6.1px;letter-spacing:0.25px;color:#ffffff">30 / 30</div>
<div class="a" style="left:2px;top:139.60px;width:115.8px;height:16.2px;background:#dcdcdc"></div>
<div class="a" style="left:3px;top:144.20px;width:5px;height:5px;background:#fff;border:0.6px solid #7a7a7a;border-radius:0.8px"></div>
<div class="t " style="left:13.00px;top:139.50px;font-size:5.13px;color:#444;">Square tube Width30 X R2</div>
<div class="t " style="left:13.00px;top:147.80px;font-size:4.72px;color:#444;">Parts type: &nbsp;1</div>
<div class="t " style="left:48.20px;top:147.80px;font-size:4.72px;color:#444;">Rest/Total: 20/20</div>
<div class="a" style="left:10.6px;top:155.80px;width:32.4px;height:33.45px;background:#f3f3f3"></div>
<div class="a" style="left:3px;top:170.40px;width:5px;height:5px;background:#fff;border:0.6px solid #7a7a7a;border-radius:0.8px"></div>
<div class="a" style="left:47px;top:155.90px;width:70.8px;height:10px;overflow:hidden"><div class="t b" style="left:0;top:0;font-size:5.6px;color:#333">Square tube Width30 X R2</div></div>
<div class="t " style="left:47.00px;top:164.00px;font-size:5.0px;color:#666;transform:scaleX(0.86);transform-origin:0 0;">30mmX30mmX115mm</div>
<div class="t b" style="left:47px;top:178.80px;font-size:6.1px;letter-spacing:0.25px;color:#333">20 / 20</div>
<div class="a" style="left:2px;top:189.35px;width:115.8px;height:16.2px;background:#dcdcdc"></div>
<div class="a" style="left:3px;top:193.95px;width:5px;height:5px;background:#fff;border:0.6px solid #7a7a7a;border-radius:0.8px"></div>
<div class="t " style="left:13.00px;top:189.25px;font-size:5.13px;color:#444;">Obround tube Width80 X R20</div>
<div class="t " style="left:13.00px;top:197.55px;font-size:4.72px;color:#444;">Parts type: &nbsp;1</div>
<div class="t " style="left:48.20px;top:197.55px;font-size:4.72px;color:#444;">Rest/Total: 15/15</div>
<div class="a" style="left:10.6px;top:205.55px;width:32.4px;height:33.45px;background:#f3f3f3"></div>
<div class="a" style="left:3px;top:220.15px;width:5px;height:5px;background:#fff;border:0.6px solid #7a7a7a;border-radius:0.8px"></div>
<div class="a" style="left:47px;top:205.65px;width:70.8px;height:10px;overflow:hidden"><div class="t b" style="left:0;top:0;font-size:5.6px;color:#333">Obround tube Width80 X R20</div></div>
<div class="t " style="left:47.00px;top:213.75px;font-size:5.0px;color:#666;transform:scaleX(0.86);transform-origin:0 0;">40mmX80mmX40mm</div>
<div class="t b" style="left:47px;top:228.55px;font-size:6.1px;letter-spacing:0.25px;color:#333">15 / 15</div>
<div class="a" style="left:2px;top:239.10px;width:115.8px;height:16.2px;background:#dcdcdc"></div>
<div class="a" style="left:3px;top:243.70px;width:5px;height:5px;background:#fff;border:0.6px solid #7a7a7a;border-radius:0.8px"></div>
<div class="t " style="left:13.00px;top:239.00px;font-size:5.13px;color:#444;">C Shape Width100 X Height50 X ...</div>
<div class="t " style="left:13.00px;top:247.30px;font-size:4.72px;color:#444;">Parts type: &nbsp;1</div>
<div class="t " style="left:48.20px;top:247.30px;font-size:4.72px;color:#444;">Rest/Total: 30/30</div>
<div class="a" style="left:10.6px;top:255.30px;width:32.4px;height:33.45px;background:#f3f3f3"></div>
<div class="a" style="left:3px;top:269.90px;width:5px;height:5px;background:#fff;border:0.6px solid #7a7a7a;border-radius:0.8px"></div>
<div class="a" style="left:47px;top:255.40px;width:70.8px;height:10px;overflow:hidden"><div class="t b" style="left:0;top:0;font-size:5.6px;color:#333">C Shape Width100 X Height50</div></div>
<div class="t " style="left:47.00px;top:263.50px;font-size:5.0px;color:#666;transform:scaleX(0.86);transform-origin:0 0;">50mmX100mmX100mm</div>
<div class="t b" style="left:47px;top:278.30px;font-size:6.1px;letter-spacing:0.25px;color:#333">30 / 30</div>
<div class="a" style="left:2px;top:288.85px;width:115.8px;height:16.2px;background:#dcdcdc"></div>
<div class="a" style="left:3px;top:293.45px;width:5px;height:5px;background:#fff;border:0.6px solid #7a7a7a;border-radius:0.8px"></div>
<div class="t " style="left:13.00px;top:288.75px;font-size:5.13px;color:#444;">L tube(L) Width65 X Height60</div>
<div class="t " style="left:13.00px;top:297.05px;font-size:4.72px;color:#444;">Parts type: &nbsp;1</div>
<div class="t " style="left:48.20px;top:297.05px;font-size:4.72px;color:#444;">Rest/Total: 22/22</div>
<div class="a" style="left:10.6px;top:305.05px;width:32.4px;height:33.45px;background:#f3f3f3"></div>
<div class="a" style="left:3px;top:319.65px;width:5px;height:5px;background:#fff;border:0.6px solid #7a7a7a;border-radius:0.8px"></div>
<div class="a" style="left:47px;top:305.15px;width:70.8px;height:10px;overflow:hidden"><div class="t b" style="left:0;top:0;font-size:5.6px;color:#333">L tube(L) Width65 X Height60</div></div>
<div class="t " style="left:47.00px;top:313.25px;font-size:5.0px;color:#666;transform:scaleX(0.86);transform-origin:0 0;">60mmX65mmX200mm</div>
<div class="t b" style="left:47px;top:328.05px;font-size:6.1px;letter-spacing:0.25px;color:#333">22 / 22</div>
<div class="a" style="left:2px;top:338.60px;width:115.8px;height:16.2px;background:#dcdcdc"></div>
<div class="a" style="left:3px;top:343.20px;width:5px;height:5px;background:#fff;border:0.6px solid #7a7a7a;border-radius:0.8px"></div>
<div class="t " style="left:13.00px;top:338.50px;font-size:5.13px;color:#444;">Triangle Width97.457 X Height56...</div>
<div class="t " style="left:13.00px;top:346.80px;font-size:4.72px;color:#444;">Parts type: &nbsp;1</div>
<div class="t " style="left:48.20px;top:346.80px;font-size:4.72px;color:#444;">Rest/Total: 30/30</div>
<div class="a" style="left:10.6px;top:354.80px;width:32.4px;height:33.45px;background:#f3f3f3"></div>
<div class="a" style="left:3px;top:369.40px;width:5px;height:5px;background:#fff;border:0.6px solid #7a7a7a;border-radius:0.8px"></div>
<div class="a" style="left:47px;top:354.90px;width:70.8px;height:10px;overflow:hidden"><div class="t b" style="left:0;top:0;font-size:5.6px;color:#333">Triangle Width97.457 X Height56</div></div>
<div class="t " style="left:47.00px;top:363.00px;font-size:5.0px;color:#666;transform:scaleX(0.86);transform-origin:0 0;">56.64mmX97.46mmX200mm</div>
<div class="t b" style="left:47px;top:377.80px;font-size:6.1px;letter-spacing:0.25px;color:#333">30 / 30</div>
<div class="a" style="left:2px;top:388.35px;width:115.8px;height:16.2px;background:#dcdcdc"></div>
<div class="a" style="left:3px;top:392.95px;width:5px;height:5px;background:#fff;border:0.6px solid #7a7a7a;border-radius:0.8px"></div>
<div class="t " style="left:13.00px;top:388.25px;font-size:5.13px;color:#444;">U tube Width75 X Height40</div>
<div class="t " style="left:13.00px;top:396.55px;font-size:4.72px;color:#444;">Parts type: &nbsp;1</div>
<div class="t " style="left:48.20px;top:396.55px;font-size:4.72px;color:#444;">Rest/Total: 1/1</div>
<div class="a" style="left:2px;top:404.6px;width:122.7px;height:16px;background:#e4e4e4"></div>
<div class="t " style="left:13.50px;top:409.60px;font-size:4.9px;color:#444;">Select</div>
<div class="t " style="left:46.60px;top:409.60px;font-size:4.9px;color:#444;">Sort</div>
<div class="a" style="left:80.5px;top:410.3px;width:5.8px;height:6px;background:#fff;border:0.6px solid #7a7a7a;border-radius:0.8px"></div>
<div class="t " style="left:87.30px;top:409.60px;font-size:4.8px;color:#444;">Hide Nested Parts</div>
<svg class="a" style="left:0;top:0" width="130" height="422"><rect x="88" y="92.15" width="4.5" height="4.4" fill="#7a7a7a"/><rect x="88.7" y="92.95" width="3" height="0.5" fill="#ddd"/><rect x="88.7" y="94.35" width="3" height="0.5" fill="#ddd"/><rect x="90.5" y="94.75" width="2.3" height="2.3" fill="#fff"/><path d="M103.6,97.75 L105.6,99.65 L107.6,97.75" stroke="#444" stroke-width="0.75" fill="none"/><path d="M14.2,121.9 L33.3,110.3 L39.2,112.8 L38.8,121.9 L17.5,135.3 L14.2,133 Z" fill="#5a6078"/><path d="M14.2,121.9 L33.3,110.3 L39.2,112.8 L20,124.5 Z" fill="#6a7088"/><path d="M18,126 L38.8,113.5 M17.5,131.5 L38.8,119 M18.5,133.5 L38.8,121" stroke="#8a90a8" stroke-width="0.45"/><path d="M20,124.5 L39.2,112.8" stroke="#9aa0b8" stroke-width="0.5"/><path d="M14.2,121.9 L17.5,124.2 M15.6,123 V134 M14.2,133.5 L17.5,135.3 M38.9,112.8 V121.9 M33.3,110.3 L39.2,112.8" stroke="#22e022" stroke-width="0.9" fill="none"/><rect x="79" y="141.90" width="4.5" height="4.4" fill="#7a7a7a"/><rect x="79.7" y="142.70" width="3" height="0.5" fill="#ddd"/><rect x="79.7" y="144.10" width="3" height="0.5" fill="#ddd"/><rect x="81.5" y="144.50" width="2.3" height="2.3" fill="#fff"/><path d="M103.6,147.50 L105.6,149.40 L107.6,147.50" stroke="#444" stroke-width="0.75" fill="none"/><path d="M14,179.5 L19,171.5 L35,162 L39.5,165 L39.5,170.5 L18.5,183.5 Z" fill="#1f5a96"/><path d="M14,179.5 L19,171.5 L25,174 L18.5,183.5 Z" fill="#2a68a8" stroke="#2ac040" stroke-width="0.7"/><rect x="85.2" y="191.65" width="4.5" height="4.4" fill="#7a7a7a"/><rect x="85.9" y="192.45" width="3" height="0.5" fill="#ddd"/><rect x="85.9" y="193.85" width="3" height="0.5" fill="#ddd"/><rect x="87.7" y="194.25" width="2.3" height="2.3" fill="#fff"/><path d="M103.6,197.25 L105.6,199.15 L107.6,197.25" stroke="#444" stroke-width="0.75" fill="none"/><path d="M14,219 Q14,212.5 21,211.5 L25,211.5 Q36,213 39.6,221 Q40.5,226 36,228.5 L31,232.5 Q27,234 23,232 L17,228 Q13.5,225 14,219 Z" fill="#1e9a4a" stroke="#2ad040" stroke-width="0.7"/><path d="M19,213 Q22,211.3 25.5,211.6 Q35.5,213.5 39.4,221.5 Q40,225.5 37,228 L32,231.5 Q31.5,225 29,221.5 Q25,216.5 19,213 Z" fill="#24b052"/><path d="M18.3,213.3 Q26.5,216.5 29.5,222.5 Q31.5,226.5 31.8,231.8" stroke="#40d060" stroke-width="0.6" fill="none"/><rect x="98" y="241.40" width="4.5" height="4.4" fill="#7a7a7a"/><rect x="98.7" y="242.20" width="3" height="0.5" fill="#ddd"/><rect x="98.7" y="243.60" width="3" height="0.5" fill="#ddd"/><rect x="100.5" y="244.00" width="2.3" height="2.3" fill="#fff"/><path d="M103.6,247.00 L105.6,248.90 L107.6,247.00" stroke="#444" stroke-width="0.75" fill="none"/><path d="M14,269 L27,261 L40,268.5 L40,276.5 L26,284 L25,282.5 L26,281.5 L26,277 L17,272 L17,278 L14,276.5 Z" fill="#6a5ae0" stroke="#2ab860" stroke-width="0.6"/><path d="M14,269 L27,261 L40,268.5 L27,276 Z" fill="#7a6cf0"/><path d="M14,269 L27,276 L40,268.5 M27,276 V283" stroke="#5040c0" stroke-width="0.4" fill="none"/><rect x="86.8" y="291.15" width="4.5" height="4.4" fill="#7a7a7a"/><rect x="87.5" y="291.95" width="3" height="0.5" fill="#ddd"/><rect x="87.5" y="293.35" width="3" height="0.5" fill="#ddd"/><rect x="89.3" y="293.75" width="2.3" height="2.3" fill="#fff"/><path d="M103.6,296.75 L105.6,298.65 L107.6,296.75" stroke="#444" stroke-width="0.75" fill="none"/><path d="M14,322 L34,311 L39.5,314.5 L20,326 Z" fill="#30c8c0" stroke="#30d070" stroke-width="0.5"/><path d="M14,322 L20,326 L14,329.5 Z" fill="#28b0c0" stroke="#22d040" stroke-width="0.7"/><rect x="98" y="340.90" width="4.5" height="4.4" fill="#7a7a7a"/><rect x="98.7" y="341.70" width="3" height="0.5" fill="#ddd"/><rect x="98.7" y="343.10" width="3" height="0.5" fill="#ddd"/><rect x="100.5" y="343.50" width="2.3" height="2.3" fill="#fff"/><path d="M103.6,346.50 L105.6,348.40 L107.6,346.50" stroke="#444" stroke-width="0.75" fill="none"/><path d="M14,372 L32,361.5 L39.5,366.5 L22,376.5 Z" fill="#b090e8"/><path d="M14,372 L22,376.5 L17,379 Z" fill="#a080e0" stroke="#30b040" stroke-width="0.8"/><path d="M32,361.5 L39.5,366.5" stroke="#30b040" stroke-width="0.8"/><rect x="80.5" y="390.65" width="4.5" height="4.4" fill="#7a7a7a"/><rect x="83" y="393.25" width="2.3" height="2.3" fill="#fff"/><path d="M103.6,396.25 L105.6,398.15 L107.6,396.25" stroke="#444" stroke-width="0.75" fill="none"/><g fill="#8a8a8a"><rect x="5.8" y="410.8" width="5.6" height="1"/><rect x="5.8" y="412.4" width="5.6" height="1"/><rect x="5.8" y="414" width="5.6" height="1"/><rect x="5.8" y="415.6" width="5.6" height="1"/><rect x="39" y="410.8" width="5.6" height="1"/><rect x="39" y="412.4" width="5.6" height="1"/><rect x="39" y="414" width="5.6" height="1"/><rect x="39" y="415.6" width="5.6" height="1"/></g><rect x="30.2" y="413.3" width="1.1" height="1" fill="#222"/><rect x="58.6" y="413.3" width="1.1" height="1" fill="#222"/></svg>
<svg class="a" style="left:0;top:0" width="130" height="432"><rect x="0.95" y="88.85" width="124.9" height="332.2" rx="1" fill="none" stroke="#f7bf00" stroke-width="1.9"/></svg><!-- CANVAS DRAWING -->
<svg class="a" style="left:0;top:0" width="800" height="432" viewBox="0 0 800 432">
<rect x="132.6" y="61.5" width="11.4" height="1.8" fill="#2b5ea8"/>
<rect x="132.6" y="80.6" width="11.4" height="1.8" fill="#2b5ea8"/>
<rect x="137.4" y="61.5" width="1.8" height="20.9" fill="#2b5ea8"/>
<polygon points="333.4,226.27612903225807 561.2,95.1 561.2,190.2 333.4,321.37391304347824" fill="#30304f"/>
<polygon points="333.4,321.37391304347824 354.5,333.3 582.3,202.1 561.2,190.2" fill="#48495f"/>
<polygon points="354.5,333.3 582.3,202.1 582.3,207.5 354.5,338.7" fill="#2e2d50"/>
<polygon points="308.5,307.3 354.5,333.3 354.5,338.7 308.5,312.7" fill="#35325a"/>
<polygon points="308.5,307.3 328.7,295.66593503072875 328.7,318.7173913043478" fill="#48495f"/>
<polygon points="328.7,223.63806451612902 333.4,226.27612903225807 333.4,321.37391304347824 328.7,318.7173913043478" fill="#35325a"/>
<polygon points="355.0,233.9 582.8,102.7 582.8,107.2 355.0,238.4" fill="#2e2d50"/>
<polygon points="308.5,207.8 536.3,76.6 582.8,102.7 355.0,233.9" fill="#48495f"/>
<polygon points="308.5,207.8 355.0,233.9 355.0,238.4 308.5,212.3" fill="#35325a"/>
<line x1="308.5" y1="207.8" x2="536.3" y2="76.6" stroke="#b9b9c9" stroke-width="0.8"/>
<line x1="582.8" y1="102.7" x2="355.0" y2="233.9" stroke="#b9b9c9" stroke-width="0.8"/>
<line x1="308.5" y1="207.8" x2="308.5" y2="212.3" stroke="#b9b9c9" stroke-width="0.8"/>
<line x1="355.0" y1="233.9" x2="355.0" y2="238.4" stroke="#b9b9c9" stroke-width="0.8"/>
<path d="M308.50,212.30 L326.78,222.56 Q328.70,223.64 328.70,225.84 L328.70,318.72" stroke="#b9b9c9" stroke-width="0.8" fill="none"/>
<path d="M308.50,307.30 L326.78,317.63 Q328.70,318.72 328.70,316.52 L328.70,223.64" stroke="#b9b9c9" stroke-width="0.8" fill="none"/>
<line x1="355.0" y1="238.4" x2="334.9" y2="227.12612903225806" stroke="#b9b9c9" stroke-width="0.8"/>
<line x1="355.0" y1="238.4" x2="582.8" y2="107.2" stroke="#b9b9c9" stroke-width="0.8"/>
<line x1="582.8" y1="102.7" x2="582.8" y2="107.2" stroke="#b9b9c9" stroke-width="0.8"/>
<line x1="308.5" y1="307.3" x2="328.7" y2="295.66593503072875" stroke="#b9b9c9" stroke-width="0.8"/>
<line x1="308.5" y1="307.3" x2="308.5" y2="312.7" stroke="#b9b9c9" stroke-width="0.8"/>
<line x1="354.5" y1="333.3" x2="354.5" y2="338.7" stroke="#b9b9c9" stroke-width="0.8"/>
<line x1="354.5" y1="333.3" x2="582.3" y2="202.1" stroke="#b9b9c9" stroke-width="0.8"/>
<line x1="354.5" y1="338.7" x2="582.3" y2="207.5" stroke="#b9b9c9" stroke-width="0.8"/>
<line x1="582.3" y1="202.1" x2="582.3" y2="207.5" stroke="#b9b9c9" stroke-width="0.8"/>
<line x1="333.4" y1="321.37391304347824" x2="354.5" y2="333.3" stroke="#b9b9c9" stroke-width="0.8"/>
<line x1="336.4" y1="323.1" x2="564.2" y2="191.9" stroke="#c0c0d0" stroke-width="0.6"/>
<line x1="338.0" y1="324.0" x2="565.8" y2="192.8" stroke="#c0c0d0" stroke-width="0.6"/>
<line x1="333.4" y1="321.4" x2="561.2" y2="190.2" stroke="#8a8aa0" stroke-width="0.6"/>
<line x1="536.3" y1="76.6" x2="582.8" y2="102.7" stroke="#22dd22" stroke-width="1.15"/>
<line x1="308.5" y1="207.8" x2="355.0" y2="233.9" stroke="#22dd22" stroke-width="1.15"/>
<path d="M333.4,321.37391304347824 L333.4,228.27612903225807 Q333.4,226.27612903225807 335.2,227.27612903225807" stroke="#22dd22" stroke-width="1.15" fill="none"/>
<line x1="308.5" y1="312.7" x2="354.5" y2="338.7" stroke="#22dd22" stroke-width="1.15"/>
<line x1="561.2" y1="119.8" x2="561.2" y2="190.2" stroke="#22dd22" stroke-width="1.15"/>
<rect x="581.8" y="101.7" width="2" height="2" fill="#fff"/>
<rect x="354.0" y="232.9" width="2" height="2" fill="#fff"/>
<rect x="581.3" y="206.5" width="2" height="2" fill="#fff"/>
<rect x="353.5" y="337.7" width="2" height="2" fill="#fff"/>

<text x="560" y="144.4" font-family="Liberation Sans" font-size="11.2" fill="#e0e0e0">2</text>
<line x1="331.1" y1="232" x2="331.1" y2="266" stroke="#2424b0" stroke-width="0.9"/>
<line x1="331.8" y1="273.3" x2="358.9" y2="257.4" stroke="#1f7a3a" stroke-width="0.8"/>
<circle cx="358.9" cy="257.4" r="1.1" fill="#22a040"/>
<text x="362" y="256" font-family="Liberation Sans" font-size="7" fill="#2a7a3a">Y</text>
<line x1="331.8" y1="273.3" x2="358.9" y2="288.9" stroke="#1aa8c0" stroke-width="0.9"/>
<circle cx="358.9" cy="288.9" r="1.2" fill="#22d0f0"/>
<text x="363" y="292" font-family="Liberation Sans" font-size="7" fill="#1aa8c0">X</text>
<path d="M331,266 L331,274 L336,274 M333,272 L337,268 L337,274" stroke="#f0f0f0" stroke-width="1.2" fill="none"/>
<circle cx="331.5" cy="273" r="0.9" fill="#e02020"/>
</svg>
<div class="t" style="left:155px;top:60.5px;font-size:6.77px;color:#dedede;-webkit-text-stroke:0">H-beam Width100 X Height200</div>
<div class="t" style="left:155px;top:72.5px;font-size:6.77px;color:#dedede;-webkit-text-stroke:0">H-beam Width100 X Height200 Length 500.00</div>

<svg class="a" style="left:0;top:0" width="800" height="432"><rect x="788.45" y="57.35" width="9.3" height="163" rx="1.4" fill="#fbfbfb" stroke="#f7bf00" stroke-width="1.3"/></svg>
<svg class="a" style="left:0;top:0" width="800" height="432"><rect x="779.6" y="58.2" width="6.4" height="0.9" fill="#9a9a9a"/><path d="M780.5,61.3 h4.6 M780.5,66.8 h4.6 M782.8,61.3 v5.5" stroke="#8a8a8a" stroke-width="0.9"/><rect x="780" y="71.6" width="5.6" height="4.2" rx="0.8" fill="#5a8ac8"/><rect x="781.3" y="72.7" width="3" height="2" fill="#a8d0a8"/><path d="M780.3,84.8 L785.5,80.2" stroke="#3aa03a" stroke-width="0.9"/><path d="M781.8,83.4 L784,81.5" stroke="#e07030" stroke-width="0.9"/><circle cx="782.8" cy="91.3" r="2.4" fill="none" stroke="#3ab03a" stroke-width="0.8"/><path d="M780.2,103.5 L785.2,99.3" stroke="#2a8a3a" stroke-width="2.4" stroke-linecap="round"/><path d="M791.2,60 L793,61.8 L796.3,58.2" stroke="#e8603a" stroke-width="0.8" fill="none"/><path d="M791.6,66.6 L795.8,70.8 M795.8,66.6 L791.6,70.8" stroke="#333" stroke-width="0.8"/><rect x="790.4" y="74.9" width="6.8" height="6.9" fill="#00ff00" stroke="#9a9a9a" stroke-width="0.45"/><rect x="790.4" y="84.1" width="6.8" height="6.9" fill="#00ffff" stroke="#9a9a9a" stroke-width="0.45"/><rect x="790.4" y="93" width="6.8" height="6.9" fill="#0000ff" stroke="#9a9a9a" stroke-width="0.45"/><rect x="790.4" y="102.5" width="6.8" height="6.9" fill="#ff00ff" stroke="#9a9a9a" stroke-width="0.45"/><rect x="790.4" y="111.4" width="6.8" height="6.9" fill="#ffff80" stroke="#9a9a9a" stroke-width="0.45"/><rect x="790.4" y="120.3" width="6.8" height="6.9" fill="#00ff80" stroke="#9a9a9a" stroke-width="0.45"/><rect x="790.4" y="129.6" width="6.8" height="6.9" fill="#80ffff" stroke="#9a9a9a" stroke-width="0.45"/><rect x="790.4" y="138.6" width="6.8" height="6.9" fill="#8080ff" stroke="#9a9a9a" stroke-width="0.45"/><rect x="790.4" y="148.3" width="6.8" height="6.9" fill="#ff0080" stroke="#9a9a9a" stroke-width="0.45"/><rect x="790.4" y="157.4" width="6.8" height="6.9" fill="#ff8040" stroke="#9a9a9a" stroke-width="0.45"/><rect x="790.4" y="166.4" width="6.8" height="6.9" fill="#8000ff" stroke="#9a9a9a" stroke-width="0.45"/><rect x="790.4" y="175.6" width="6.8" height="6.9" fill="#0080ff" stroke="#9a9a9a" stroke-width="0.45"/><rect x="790.4" y="184.6" width="6.8" height="6.9" fill="#800080" stroke="#9a9a9a" stroke-width="0.45"/><rect x="790.4" y="194.3" width="6.8" height="6.9" fill="#008080" stroke="#9a9a9a" stroke-width="0.45"/><rect x="790.4" y="203" width="6.8" height="6.9" fill="#008000" stroke="#9a9a9a" stroke-width="0.45"/><path d="M793.8,213.5 L792.2,215.5 H793.2 V219 H794.4 V215.5 H795.4 Z" fill="#333"/><path d="M790.6,212.3 h6.6" stroke="#d0a060" stroke-width="0.4" stroke-dasharray="0.6 0.6"/></svg><div class="a" style="left:129.4px;top:374.8px;width:4.8px;height:4.8px;background:#fff;border:0.6px solid #777;border-radius:0.6px"></div>
<div class="t" style="left:137.60px;top:373.30px;font-size:4.5px;color:#444;">Nesting</div>
<div class="t" style="left:204.20px;top:373.30px;font-size:4.5px;color:#444;">Tube ...</div>
<div class="t" style="left:224.00px;top:373.30px;font-size:4.5px;color:#444;">Tube l...</div>
<div class="t" style="left:244.00px;top:373.30px;font-size:4.5px;color:#444;">Remnant &nbsp;Part...</div>
<div class="t" style="left:303.80px;top:373.30px;font-size:4.5px;color:#444;">Utilization</div>
<div class="t" style="left:359.80px;top:373.30px;font-size:4.5px;color:#444;">Lock</div>
<div class="a" style="left:201.2px;top:373.5px;width:0.6px;height:8px;background:#cfcfcf"></div>
<div class="a" style="left:222.2px;top:373.5px;width:0.6px;height:8px;background:#cfcfcf"></div>
<div class="a" style="left:242px;top:373.5px;width:0.6px;height:8px;background:#cfcfcf"></div>
<div class="a" style="left:279px;top:373.5px;width:0.6px;height:8px;background:#cfcfcf"></div>
<div class="a" style="left:348.4px;top:373.5px;width:0.6px;height:8px;background:#cfcfcf"></div>
<svg class="a" style="left:0;top:0" width="800" height="432"><text x="393.75" y="377.75" font-family="Liberation Sans" font-size="4.9" fill="#333" transform="translate(393.75 0) scale(0.9 1) translate(-393.75 0)">Completed</text><text x="393.75" y="383.35" font-family="Liberation Sans" font-size="4.9" fill="#333" transform="translate(393.75 0) scale(0.9 1) translate(-393.75 0)">(03-17 14:05:46)</text><text x="393.75" y="388.95" font-family="Liberation Sans" font-size="4.9" fill="#333" transform="translate(393.75 0) scale(0.9 1) translate(-393.75 0)">Command:Draw Part</text><text x="393.75" y="394.55" font-family="Liberation Sans" font-size="4.9" fill="#333" transform="translate(393.75 0) scale(0.9 1) translate(-393.75 0)">(03-17 14:05:46)</text><text x="393.75" y="400.15" font-family="Liberation Sans" font-size="4.9" fill="#333" transform="translate(393.75 0) scale(0.9 1) translate(-393.75 0)">Completed</text><text x="393.75" y="405.75" font-family="Liberation Sans" font-size="4.9" fill="#333" transform="translate(393.75 0) scale(0.9 1) translate(-393.75 0)">(03-17 14:05:52)</text><text x="393.75" y="411.35" font-family="Liberation Sans" font-size="4.9" fill="#333" transform="translate(393.75 0) scale(0.9 1) translate(-393.75 0)">Command:</text><text x="393.75" y="416.95" font-family="Liberation Sans" font-size="4.9" fill="#333" transform="translate(393.75 0) scale(0.9 1) translate(-393.75 0)">(03-17 14:06:02)</text><text x="393.75" y="422.55" font-family="Liberation Sans" font-size="4.9" fill="#333" transform="translate(393.75 0) scale(0.9 1) translate(-393.75 0)">Completed</text></svg>
<div class="a" style="left:770.8px;top:373px;width:6.2px;height:49px;background:#f0f0f0"></div>
<div class="a" style="left:772px;top:408.5px;width:3.8px;height:8px;background:#bdbdbd"></div>
<svg class="a" style="left:0;top:0" width="800" height="432"><path d="M772.8,378 L773.9,376.6 L775,378 Z" fill="#666"/><path d="M772.8,418.5 L773.9,419.9 L775,418.5 Z" fill="#666"/></svg>
<div class="t" style="left:700px;top:423px;width:75px;text-align:right;font-size:4.65px;color:#d8d8d8">11594.92, 10959.86</div>
<div class="a" style="left:733px;top:423px;width:0.6px;height:9px;background:#6a6a6a"></div>
<div class="a" style="left:777px;top:423px;width:0.6px;height:9px;background:#6a6a6a"></div><!-- ANNOTATIONS -->
<svg class="a" style="left:0;top:0" width="800" height="432"><polygon points="401.70,65.50 402.30,20.50 403.80,20.50 401.20,15.30 398.60,20.50 400.10,20.50 400.70,65.50" fill="#f7bf00"/><polygon points="181.00,118.85 134.90,117.90 134.90,116.00 128.40,119.60 134.90,123.20 134.90,121.30 181.00,120.35" fill="#f7bf00"/><polygon points="693.15,96.50 693.73,58.99 695.93,58.98 692.40,52.60 688.93,59.02 691.13,59.01 692.05,96.50" fill="#2996ea"/><polygon points="719.40,197.55 779.91,198.32 779.91,200.22 786.40,196.60 779.89,193.02 779.89,194.92 719.40,196.05" fill="#f7bf00"/><polygon points="212.50,309.00 212.05,359.61 210.65,359.61 213.30,368.60 215.85,359.59 214.45,359.59 213.50,309.00" fill="#f7bf00"/><polygon points="467.40,319.01 467.21,363.31 465.61,363.33 468.50,371.30 471.21,363.27 469.61,363.29 468.40,318.99" fill="#f7bf00"/></svg>
<svg class="a" style="left:0;top:0" width="800" height="432"><polygon points="401.70,65.50 402.30,20.50 403.80,20.50 401.20,15.30 398.60,20.50 400.10,20.50 400.70,65.50" fill="#f7bf00"/><polygon points="181.00,118.85 134.90,117.90 134.90,116.00 128.40,119.60 134.90,123.20 134.90,121.30 181.00,120.35" fill="#f7bf00"/><polygon points="693.15,96.50 693.73,58.99 695.93,58.98 692.40,52.60 688.93,59.02 691.13,59.01 692.05,96.50" fill="#2996ea"/><polygon points="719.40,197.55 779.91,198.32 779.91,200.22 786.40,196.60 779.89,193.02 779.89,194.92 719.40,196.05" fill="#f7bf00"/><polygon points="212.50,309.00 212.05,359.61 210.65,359.61 213.30,368.60 215.85,359.59 214.45,359.59 213.50,309.00" fill="#f7bf00"/><polygon points="467.40,319.01 467.21,363.31 465.61,363.33 468.50,371.30 471.21,363.27 469.61,363.29 468.40,318.99" fill="#f7bf00"/></svg>
<div class="ann" style="left:378px;top:65.50px;font-size:15px;color:#f7bf00;transform:scaleX(0.9402);transform-origin:0 0;-webkit-text-stroke:0.25px #f7bf00">Title Bar</div>
<div class="ann" style="left:185px;top:110.50px;font-size:15px;color:#f7bf00;transform:scaleX(0.9237);transform-origin:0 0;-webkit-text-stroke:0.25px #f7bf00">Part List</div>
<div class="ann" style="left:632.3px;top:95.50px;font-size:15px;color:#2996ea;transform:scaleX(0.9500);transform-origin:0 0;-webkit-text-stroke:0.25px #2996ea">Technical Suppot</div>
<div class="ann" style="left:644.9px;top:188.50px;font-size:15px;color:#f7bf00;transform:scaleX(0.9295);transform-origin:0 0;-webkit-text-stroke:0.25px #f7bf00">Layer Tools</div>
<div class="ann" style="left:169.7px;top:288.50px;font-size:15px;color:#f7bf00;transform:scaleX(0.9402);transform-origin:0 0;-webkit-text-stroke:0.25px #f7bf00">Nesting Results</div>
<div class="ann" style="left:438.75px;top:301.50px;font-size:15px;color:#f7bf00;transform:scaleX(0.9149);transform-origin:0 0;-webkit-text-stroke:0.25px #f7bf00">System Log</div>
</div></body></html>
